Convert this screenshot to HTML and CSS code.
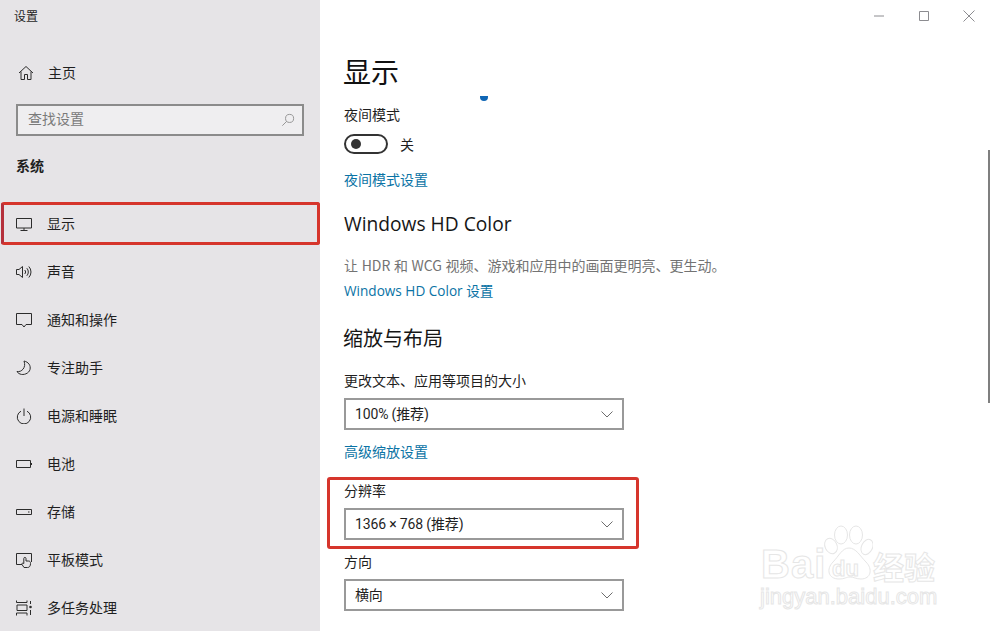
FILE: index.html
```html
<!DOCTYPE html>
<html lang="zh-CN">
<head>
<meta charset="utf-8">
<title>设置</title>
<link rel="stylesheet" href="styles.css">
</head>
<body>
<div class="window">
  <aside class="sidebar">
    <div class="app-title">设置</div>
    <div class="home-row">
      <svg class="icon" viewBox="0 0 16 16"><path d="M1 8 8 1.500 15 8M3 6.500V14.500H6.500V9.500H9.500V14.500H13V6.500"/></svg>
      <span>主页</span>
    </div>
    <div class="search">
      <span>查找设置</span>
      <svg class="search-icon" viewBox="0 0 16 16"><circle cx="9.800" cy="6.200" r="4.600"/><path d="M6.500 9.500 1.500 14.500"/></svg>
    </div>
    <div class="section-title">系统</div>
    <nav class="nav">
      <div class="nav-item selected">
        <svg class="icon" viewBox="0 0 16 16"><path d="M.5 2.500H15.500V12H.5ZM8 12V14.500M4.500 14.500H11.500"/></svg>
        <span>显示</span>
      </div>
      <div class="nav-item">
        <svg class="icon" viewBox="0 0 16 16"><path d="M.5 5.500H3L6.500 2.500V13.500L3 10.500H.5ZM8.800 6A3 3 0 0 1 8.800 10M10.800 4.200A5.500 5.500 0 0 1 10.800 11.800M12.800 2.500A8 8 0 0 1 12.800 13.500"/></svg>
        <span>声音</span>
      </div>
      <div class="nav-item">
        <svg class="icon" viewBox="0 0 16 16"><path d="M.5 1.500H15.500V12.500H10L8 15 6 12.500H.5Z"/></svg>
        <span>通知和操作</span>
      </div>
      <div class="nav-item">
        <svg class="icon" viewBox="0 0 16 16"><path d="M8 1C12.500 2 15 5.500 14 9.500 13 13.500 7.500 15.500 4 14 2.500 13.500 1.500 12.500 1 11.500 5.500 12.500 10.500 7.500 8 1Z"/></svg>
        <span>专注助手</span>
      </div>
      <div class="nav-item">
        <svg class="icon" viewBox="0 0 16 16"><path d="M5 3.200A6.700 6.700 0 1 0 11 3.200M8 .5V8"/></svg>
        <span>电源和睡眠</span>
      </div>
      <div class="nav-item">
        <svg class="icon" viewBox="0 0 16 16"><path d="M.5 4.500H14.500V11.500H.5ZM15.500 7V9"/></svg>
        <span>电池</span>
      </div>
      <div class="nav-item">
        <svg class="icon" viewBox="0 0 16 16"><path d="M.5 5.500H15.500V10.500H.5ZM12 8H13.500"/></svg>
        <span>存储</span>
      </div>
      <div class="nav-item">
        <svg class="icon" viewBox="0 0 16 16"><path d="M6 12.500H.5V1.500H15.500V10M8 15.500 6 12.500C5.500 11.500 6.500 10.500 7.800 11.500V6.500C7.800 5 10 5 10 6.500V9H12.500C14 9 14.500 10 14.500 11.500 14.500 14 13.500 15.500 11.500 15.500Z"/></svg>
        <span>平板模式</span>
      </div>
      <div class="nav-item">
        <svg class="icon" viewBox="0 0 16 16"><path d="M.5 .5V2.500H11V.5M.5 15.500V13H11V15.500M1 5H11V10.500H1ZM14.500 1V4M14.500 10V15"/><circle class="solid" cx="14.500" cy="7" r="1.300"/></svg>
        <span>多任务处理</span>
      </div>
    </nav>
  </aside>

  <main class="content">
    <div class="titlebar">
      <svg class="win-icon" viewBox="0 0 12 12"><path d="M1 6H11"/></svg>
      <svg class="win-icon" viewBox="0 0 12 12"><path d="M1.500 1.500H10.500V10.500H1.500Z"/></svg>
      <svg class="win-icon" viewBox="0 0 12 12"><path d="M.5 .5 11.500 11.500M11.500 .5 .5 11.500"/></svg>
    </div>
    <h1 class="page-title">显示</h1>
    <div class="label night-label">夜间模式</div>
    <div class="toggle-row">
      <span class="toggle"><span class="knob"></span></span>
      <span class="toggle-text">关</span>
    </div>
    <a class="link night-link">夜间模式设置</a>
    <h2 class="heading hd-heading">Windows HD Color</h2>
    <p class="desc">让 HDR 和 WCG 视频、游戏和应用中的画面更明亮、更生动。</p>
    <a class="link hd-link">Windows HD Color 设置</a>
    <h2 class="heading scale-heading">缩放与布局</h2>
    <div class="label scale-label">更改文本、应用等项目的大小</div>
    <div class="select"><span>100% (推荐)</span><svg class="chevron" viewBox="0 0 12 7"><path d="M.5 .5 6 6 11.500 .5"/></svg></div>
    <a class="link scale-link">高级缩放设置</a>
    <div class="label res-label">分辨率</div>
    <div class="select"><span>1366 × 768 (推荐)</span><svg class="chevron" viewBox="0 0 12 7"><path d="M.5 .5 6 6 11.500 .5"/></svg></div>
    <div class="label dir-label">方向</div>
    <div class="select"><span>横向</span><svg class="chevron" viewBox="0 0 12 7"><path d="M.5 .5 6 6 11.500 .5"/></svg></div>

    <span class="busy-dot"></span>
    <span class="scrollbar"></span>
    <div class="watermark">
      <svg class="paw" viewBox="0 0 52 55">
        <ellipse cx="10" cy="21" rx="6" ry="8" transform="rotate(-25 10 21)"/>
        <ellipse cx="20" cy="10" rx="6.500" ry="9"/>
        <ellipse cx="35" cy="10" rx="6.500" ry="9"/>
        <ellipse cx="46" cy="22" rx="5.500" ry="8" transform="rotate(25 46 22)"/>
        <path d="M28 23C21 23 18 31 12 37 5 44 7 54 18 54 24 54 25 52 29 52 33 52 35 54 40 54 50 54 52 44 45 37 39 31 35 23 28 23Z"/>
      </svg>
      <span class="wm-bai">Bai</span>
      <span class="wm-du">du</span>
      <span class="wm-cn">经验</span>
      <span class="wm-url">jingyan.baidu.com</span>
    </div>
  </main>

  <div class="mark mark-nav"></div>
  <div class="mark mark-res"></div>
</div>
</body>
</html>
```

FILE: styles.css
```css
* { box-sizing: border-box; }
html, body { margin: 0; height: 100%; overflow: hidden; background: #fff; }
body {
  font-family: "Noto Sans CJK SC", "Liberation Sans", sans-serif;
  font-size: 14px;
  line-height: 18px;
  color: #1f1f1f;
}
.window { position: relative; display: flex; width: 992px; height: 631px; overflow: hidden; }

.sidebar { flex: 0 0 320px; height: 631px; background: #e6e4e7; }
.app-title { padding: 7px 0 0 14px; height: 49px; font-size: 12px; }
.home-row { display: flex; align-items: center; gap: 14px; height: 48px; padding-left: 18px; }
.home-row span, .nav-item span { margin-bottom: 2px; }
.icon {
  flex: none; width: 16px; height: 16px; fill: none;
  stroke: #2c2c2c; stroke-width: 1;
}
.icon .solid { fill: #2c2c2c; stroke: none; }
.search {
  display: flex; align-items: center; justify-content: space-between;
  width: 288px; height: 32px; margin: 7px 0 0 16px; padding: 0 7px 0 10px;
  border: 2px solid #8b8b8b; background: #efeef0; color: #7a7a7a;
}
.search span { margin-bottom: 4px; }
.search-icon { width: 14px; height: 14px; fill: none; stroke: #8a8a8a; stroke-width: 1; }
.section-title { height: 20px; margin: 20px 0 24px 16px; font-weight: 700; }
.nav-item { display: flex; align-items: center; gap: 15px; height: 48px; padding-left: 16px; }

.content { position: relative; flex: 1; height: 631px; padding-left: 24px; background: #fff; }
.titlebar { display: flex; justify-content: flex-end; align-items: center; gap: 33px; height: 32px; margin-left: -24px; padding-right: 17px; }
.win-icon { width: 12px; height: 12px; fill: none; stroke: #8c8c90; stroke-width: 1; }

.page-title { height: 40px; margin: 20px 0 0 -1px; font-size: 28px; line-height: 38px; font-weight: 400; color: #111; }
.heading { height: 28px; margin: 0; font-size: 19.2px; line-height: 28px; font-weight: 400; color: #161616; font-family: "Open Sans", "Noto Sans CJK SC", sans-serif; }
.label, .link, .desc { display: block; height: 20px; }
.link { color: #0a73a5; }
.desc { margin-top: 18px; margin-bottom: 0; color: #737373; word-spacing: .5px; }

.night-label { margin-top: 13px; }
.toggle-row { display: flex; align-items: center; gap: 12px; height: 20px; margin-top: 9px; }
.toggle { display: flex; align-items: center; width: 44px; height: 20px; padding-left: 5px; border: 2px solid #333; border-radius: 10px; }
.knob { width: 10px; height: 10px; border-radius: 50%; background: #333; }
.night-link { margin-top: 16px; }
.hd-heading { margin-top: 20px; }
.hd-link { margin-top: 5px; font-family: "Open Sans", "Noto Sans CJK SC", sans-serif; font-size: 13.6px; line-height: 20px; }
.scale-heading { margin-top: 24px; margin-left: -1px; font-family: "Noto Sans CJK SC", sans-serif; font-size: 20px; line-height: 26px; }
.scale-label { margin-top: 18px; }
.scale-link { margin-top: 12px; }
.res-label { margin-top: 19px; }
.dir-label { margin-top: 12px; }

.select {
  display: flex; align-items: center; justify-content: space-between;
  width: 280px; height: 32px; margin-top: 7px; padding: 0 9px 0 9px;
  border: 2px solid #999;
  font-family: Roboto, "Noto Sans CJK SC", sans-serif;
  letter-spacing: -.15px;
}
.chevron { width: 12px; height: 7px; fill: none; stroke: #6d6d6d; stroke-width: 1; }

.busy-dot { position: absolute; left: 160px; top: 93px; width: 8px; height: 8px; border-radius: 0 0 4px 4px; background: #0f66b5; clip-path: inset(3px 0 0 0); }
.scrollbar { position: absolute; left: 668px; top: 150px; width: 2px; height: 253px; background: #7f7f7f; }

.watermark { position: absolute; left: 440px; top: 524px; width: 180px; height: 90px; color: #fff; font-family: "Liberation Sans", sans-serif; -webkit-text-stroke: 1px #e6e6e6; }
.watermark span { position: absolute; white-space: nowrap; }
.paw { position: absolute; left: 61px; top: 1px; width: 52px; height: 55px; fill: #fff; stroke: #e6e6e6; stroke-width: 1; }
.wm-bai { left: 1px; top: 18px; font-size: 40px; line-height: 44px; font-weight: 700; letter-spacing: 1px; }
.wm-du { left: 72px; top: 33px; font-size: 22px; line-height: 24px; font-weight: 700; }
.wm-cn { left: 113px; top: 24px; font-size: 31px; line-height: 36px; font-weight: 700; font-family: "Noto Sans CJK SC", sans-serif; }
.wm-url { left: 0; top: 60px; font-size: 22px; line-height: 26px; }

.mark { position: absolute; border: 3px solid #d6352c; border-radius: 3px; }
.mark-nav { left: 1px; top: 202px; width: 319px; height: 43px; border-left-color: #b5303c; }
.mark-res { left: 327px; top: 477px; width: 312px; height: 72px; }
```
